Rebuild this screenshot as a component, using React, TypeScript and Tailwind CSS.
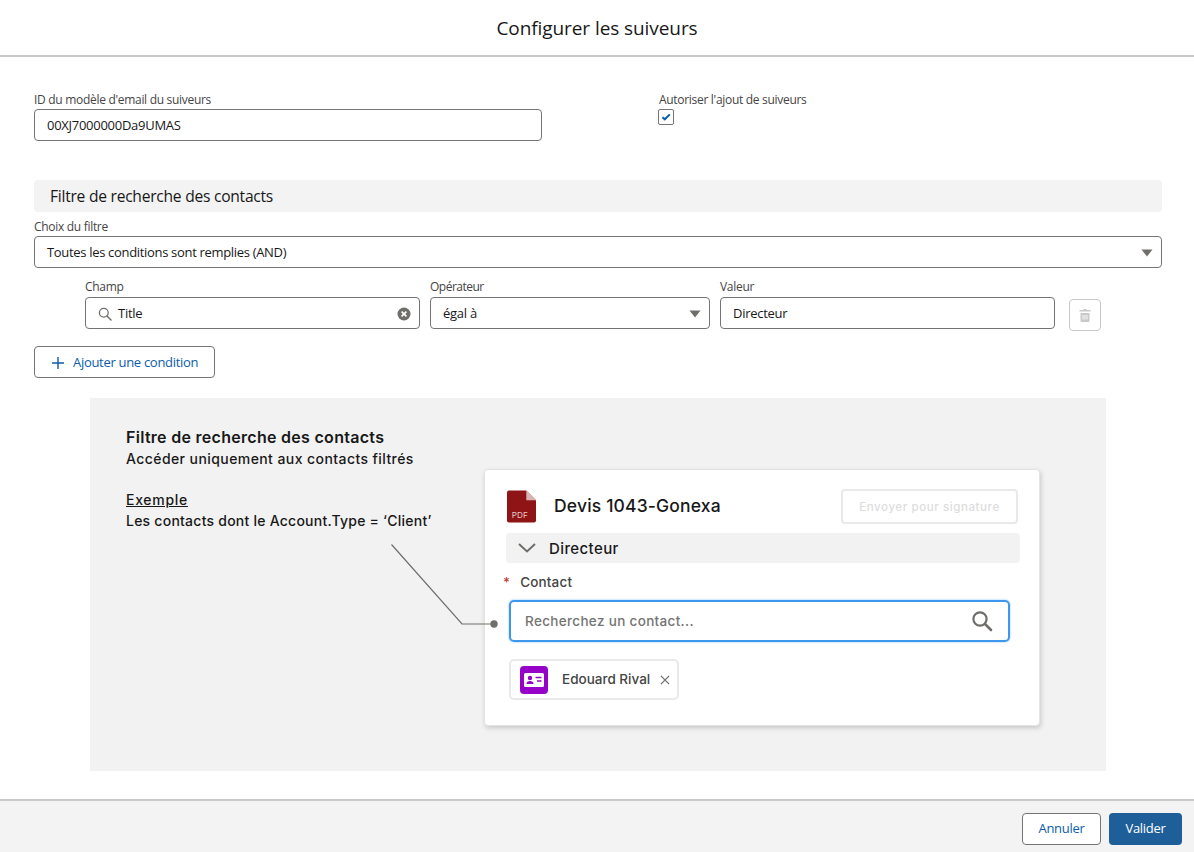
import React from "react";

const ui = "font-['Open_Sans','Noto_Sans',sans-serif]";
const art = "font-['Inter','Noto_Sans',sans-serif]";

function Caret() {
  return (
    <svg width="12" height="8" viewBox="0 0 12 8" className="shrink-0">
      <path d="M0.5 0.5h11L6 7.500z" fill="#706e6b" />
    </svg>
  );
}

function Label({ children }: { children: React.ReactNode }) {
  return <div className="h-[17px] text-[12px] leading-[17px] tracking-[-0.3px] text-[#444444]">{children}</div>;
}

function Box({ children, className = "" }: { children: React.ReactNode; className?: string }) {
  return (
    <div className={`flex h-8 items-center rounded border border-[#747474] bg-white pt-[2px] text-[13px] tracking-[-0.27px] text-[#181818] ${className}`}>
      {children}
    </div>
  );
}

export default function App() {
  return (
    <div className={`flex h-[852px] w-[1194px] flex-col overflow-hidden bg-white ${ui}`}>
      <header className="flex h-[57px] shrink-0 items-center justify-center border-b-2 border-[#c9c9c9] pt-[1px] text-[19px] tracking-[-0.08px] text-[#181818]">
        Configurer les suiveurs
      </header>

      <main className="flex-1 pl-[34px] pr-[32px] pt-[34px]">
        <div className="flex">
          <div className="w-[508px]">
            <Label>ID du modèle d'email du suiveurs</Label>
            <Box className="mt-[1px] px-3">00XJ7000000Da9UMAS</Box>
          </div>
          <div className="ml-[117px]">
            <Label>Autoriser l'ajout de suiveurs</Label>
            <div className="-ml-[1px] mt-[1px] flex h-[16px] w-[16px] items-center justify-center rounded-[2px] border border-[#747474] bg-white">
              <svg width="10" height="8" viewBox="0 0 10 8">
                <path d="M1.500 4.200 3.800 6.300 8.800 1.400" fill="none" stroke="#0b5cab" strokeWidth="2" />
              </svg>
            </div>
          </div>
        </div>

        <div className="mt-[39px] flex h-8 items-center rounded bg-[#f3f3f3] px-4 pt-[2px] text-[15.6px] tracking-[-0.25px] text-[#181818]">
          Filtre de recherche des contacts
        </div>

        <div className="mt-[6px]">
          <Label>Choix du filtre</Label>
          <Box className="mt-[1px] justify-between pl-3 pr-[8px]">
            <span className="tracking-[-0.32px]">Toutes les conditions sont remplies (AND)</span>
            <Caret />
          </Box>
        </div>

        <div className="mt-[10px] flex pl-[51px]">
          <div className="w-[335px]">
            <Label>Champ</Label>
            <Box className="mt-[2px] pl-3 pr-2">
              <svg width="14" height="14" viewBox="0 0 14 14" className="mr-[6px] shrink-0">
                <circle cx="5.800" cy="5.800" r="4.400" fill="none" stroke="#706e6b" strokeWidth="1.300" />
                <path d="M9 9l4 4" stroke="#706e6b" strokeWidth="1.500" strokeLinecap="round" />
              </svg>
              <span className="flex-1">Title</span>
              <svg width="14" height="14" viewBox="0 0 14 14" className="shrink-0">
                <circle cx="7" cy="7" r="6.500" fill="#706e6b" />
                <path d="M4.600 4.600l4.800 4.800M9.400 4.600l-4.800 4.800" stroke="#fff" strokeWidth="1.600" />
              </svg>
            </Box>
          </div>
          <div className="ml-[10px] w-[280px]">
            <Label><span className="tracking-[-0.5px]">Opérateur</span></Label>
            <Box className="mt-[2px] justify-between pl-3 pr-[8px]">
              <span>égal à</span>
              <Caret />
            </Box>
          </div>
          <div className="ml-[10px] w-[335px]">
            <Label>Valeur</Label>
            <Box className="mt-[2px] px-3">Directeur</Box>
          </div>
          <button className="ml-[14px] mt-[21px] flex h-8 w-8 items-center justify-center rounded border border-[#c9c9c9] bg-white">
            <svg width="12" height="14" viewBox="0 0 12 14">
              <path d="M4.500 1h3v1h4v1.600H.5V2h4z" fill="#c9c9c9" />
              <path d="M1.500 5h9v8a1 1 0 0 1-1 1h-7a1 1 0 0 1-1-1z" fill="#c9c9c9" />
              <path d="M4 7v4.500M6 7v4.500M8 7v4.500" stroke="#fff" strokeWidth="0.900" />
            </svg>
          </button>
        </div>

        <button className="mt-[15px] flex h-8 w-[181px] items-center rounded border border-[#747474] bg-white pl-4 pt-[1px] text-[13px] tracking-[-0.3px] text-[#0b5cab]">
          <svg width="14" height="14" viewBox="0 0 14 14" className="mr-2 shrink-0">
            <path d="M7 1v12M1 7h12" stroke="#0b5cab" strokeWidth="1.400" />
          </svg>
          Ajouter une condition
        </button>

        <section className={`relative ml-[56px] mt-[20px] flex h-[373px] w-[1016px] bg-[#f2f2f2] pl-[36px] pt-[30px] ${art}`}>
          <div className="w-[358px] text-[#181818]">
            <div className="text-[16px] font-semibold leading-[18px] tracking-[0.29px]">Filtre de recherche des contacts</div>
            <div className="mt-[4px] text-[14px] font-medium leading-[18px] tracking-[0.42px]">Accéder uniquement aux contacts filtrés</div>
            <div className="mt-[23px] text-[14px] font-medium leading-[18px] tracking-[0.7px] underline">Exemple</div>
            <div className="mt-[3px] text-[14px] font-medium leading-[18px] tracking-[0.24px]">Les contacts dont le Account.Type = ‘Client’</div>
          </div>

          <svg width="120" height="90" viewBox="0 0 120 90" className="absolute left-[298px] top-[145px]">
            <path d="M3.500 1.500 74 81h32" fill="none" stroke="#706e6b" strokeWidth="1.200" />
            <circle cx="106" cy="81" r="3.700" fill="#706e6b" />
          </svg>

          <div className="mt-[41px] h-[257px] w-[556px] rounded border border-[#e4e4e4] bg-white pl-[21px] pr-[21px] pt-[19px] shadow-[1px_2px_5px_rgba(0,0,0,0.18)]">
            <div className="flex h-[35px] items-center justify-between">
              <div className="flex items-center">
                <svg width="29" height="33" viewBox="0 0 30 33" className="ml-[1px]">
                  <path d="M2 0h18l10 10v21a2 2 0 0 1-2 2H2a2 2 0 0 1-2-2V2a2 2 0 0 1 2-2z" fill="#8f1416" />
                  <path d="M20 0l10 10H20z" fill="#d9b4b4" />
                  <text x="5" y="28" fontSize="8.500" fill="#e8c9c9" fontFamily="Inter, sans-serif">PDF</text>
                </svg>
                <span className="ml-[18px] text-[17.5px] font-medium tracking-[0.17px] text-[#181818]">Devis 1043-Gonexa</span>
              </div>
              <div className="flex h-[35px] w-[177px] items-center justify-center rounded border-2 border-[#e9e9e9] pt-[3px] text-[11.5px] font-medium tracking-[0.6px] text-[#dddddd]">
                Envoyer pour signature
              </div>
            </div>

            <div className="mt-[9px] flex h-[30px] w-[514px] items-center rounded bg-[#f2f2f2] pl-[12px] text-[#181818]">
              <svg width="18" height="10" viewBox="0 0 18 10">
                <path d="M1 1l8 7.500L17 1" fill="none" stroke="#706e6b" strokeWidth="2" />
              </svg>
              <span className="ml-[13px] pt-[2px] text-[15px] font-medium tracking-[0.4px]">Directeur</span>
            </div>

            <div className="-ml-[3px] mt-[10px] flex h-[18px] items-center text-[13.500px] font-medium tracking-[0.15px] text-[#444444]">
              <span className="mr-[10px] text-[#c23934]">*</span>
              Contact
            </div>

            <div className="ml-[3px] mt-[9px] flex h-[42px] w-[501px] items-center justify-between rounded-[5px] border-2 border-[#3d97ee] pl-[14px] pr-[15px] text-[13.500px] font-medium tracking-[0.33px] text-[#747474] shadow-[0_0_2px_rgba(61,151,238,0.7)]">
              <span>Recherchez un contact...</span>
              <svg width="22" height="22" viewBox="0 0 22 22">
                <circle cx="9" cy="9" r="6.600" fill="none" stroke="#706e6b" strokeWidth="2.200" />
                <path d="M14 14l6 6" stroke="#706e6b" strokeWidth="2.600" strokeLinecap="round" />
              </svg>
            </div>

            <div className="ml-[3px] mt-[17px] flex h-[41px] w-[170px] items-center rounded-[5px] border-2 border-[#e9e9e9] pl-[9px] text-[13.500px] font-medium tracking-[0px] text-[#444444]">
              <div className="flex h-[28px] w-[28px] items-center justify-center rounded bg-[#9602c7]">
                <svg width="20" height="14" viewBox="0 0 20 14">
                  <rect width="20" height="14" rx="1.500" fill="#fff" />
                  <circle cx="6" cy="5" r="2.200" fill="#9602c7" />
                  <path d="M2.500 11c0-2.200 1.500-3 3.500-3s3.500.8 3.500 3z" fill="#9602c7" />
                  <path d="M11.500 4.500h6M13 8h4.500" stroke="#9602c7" strokeWidth="1.600" />
                </svg>
              </div>
              <span className="ml-[14px]">Edouard Rival</span>
              <svg width="10" height="10" viewBox="0 0 11 11" className="ml-[10px]">
                <path d="M1 1l9 9M10 1l-9 9" stroke="#706e6b" strokeWidth="1.400" />
              </svg>
            </div>
          </div>
        </section>
      </main>

      <footer className="flex h-[53px] shrink-0 items-center justify-end gap-2 border-t-2 border-[#c9c9c9] bg-[#f3f3f3] pr-3 pt-[4px] text-[13px] tracking-[-0.3px]">
        <button className="h-8 w-[79px] rounded border border-[#747474] bg-white text-[#0b5cab]">Annuler</button>
        <button className="h-8 w-[73px] rounded bg-[#1f5f99] font-medium text-white">Valider</button>
      </footer>
    </div>
  );
}
